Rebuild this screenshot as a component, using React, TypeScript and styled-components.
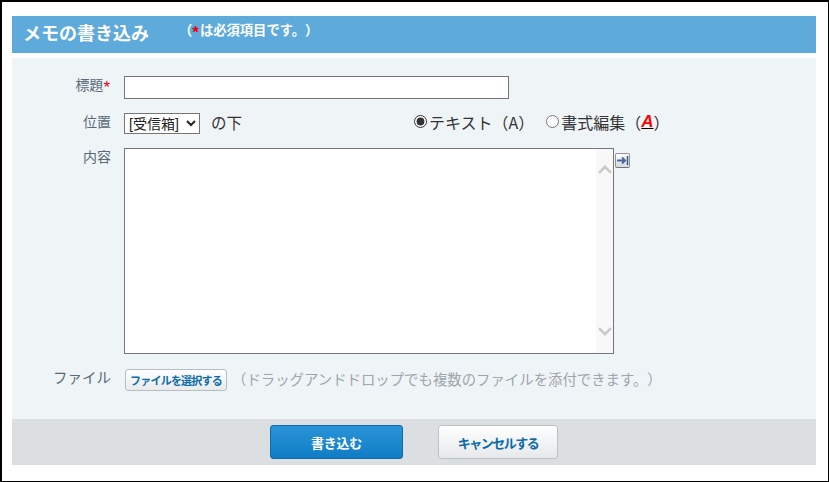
import React from "react";
import styled, { createGlobalStyle } from "styled-components";

const Global = createGlobalStyle`
  html, body { margin: 0; padding: 0; background: #fff; }
  body { font-family: "Noto Sans CJK JP", "Liberation Sans", sans-serif; text-spacing-trim: space-all; }
  * { box-sizing: border-box; }
`;
const Frame = styled.div`
  width: 829px; height: 482px; border: 2px solid #000; border-bottom-width: 1px; border-right-width: 1px;
  padding: 14px 12px 0 10px; overflow: hidden;
`;
const Header = styled.div`
  height: 37px; background: #5daadb; display: flex; align-items: flex-start; color: #fff; padding-left: 11px;
`;
const Title = styled.h1`
  margin: 3px 0 0; font-size: 18px; line-height: 26px; font-weight: 700; width: 156px;
`;
const Note = styled.span`
  margin-top: 4px; font-size: 13.3px; line-height: 20px; font-weight: 700; white-space: nowrap;
`;
const Star = styled.span`
  color: #e60012; font-size: 17px; line-height: 1; font-family: "Liberation Sans", sans-serif; vertical-align: -3px; letter-spacing: 1px;
`;
const Form = styled.div`
  margin-top: 5px; height: 361px; background: #eff4f7; padding-top: 18px; display: flex; flex-direction: column;
`;
const Row = styled.div`
  display: flex; align-items: flex-start; height: ${p => p.$h}px;
`;
const Label = styled.div`
  width: 99px; text-align: right; font-size: ${p => p.$s || 14}px; line-height: 20px; color: #5a6a78; margin: -2px 13px 0 0; white-space: nowrap;
`;
const TextInput = styled.input`
  width: 385px; height: 23px; border: 1px solid #767676; background: #fff; padding: 0 4px; outline: none;
`;
const Select = styled.select`
  width: 76px; height: 21px; border: 1px solid #767676; border-radius: 0; background: #fff; font: 14px "Liberation Sans", "Noto Sans CJK JP", sans-serif; color: #222; padding: 0; margin: 0;
`;
const After = styled.span`
  margin: -1px 0 0 11px; font-size: 15.5px; line-height: 21px; color: #333; width: 203px;
`;
const RadioLabel = styled.label`
  display: flex; align-items: center; height: 21px; margin-top: -2px; font-size: 16px; color: #333; white-space: nowrap; margin-right: ${p => p.$mr || 0}px;
`;
const Radio = styled.input`
  width: 13px; height: 13px; margin: 0 2px 0 0; accent-color: #333;
`;
const AIcon = styled.span`
  color: #f00; font-weight: 700; font-style: italic; text-decoration: underline; text-decoration-color: #000; font-family: "Liberation Sans", sans-serif; font-size: 17px;
`;
const AreaBox = styled.div`
  width: 490px; height: 206px; border: 1px solid #767676; background: #fff; display: flex; justify-content: flex-end;
`;
const Scroll = styled.div`
  width: 17px; background: #f8f8f8; display: flex; flex-direction: column; justify-content: space-between; align-items: center; padding: 16px 0 17px;
`;
const Expand = styled.button`
  width: 15px; height: 15px; margin: 5px 0 0 1px; padding: 0; background: linear-gradient(#fff, #d5dade); border: 1px solid #8d9499; border-bottom-color: #6f767b; border-radius: 2px; display: flex; align-items: center; justify-content: center;
`;
const FileButton = styled.button`
  margin: 0 0 0 1px; width: 102px; height: 22px; padding: 0; border: 1px solid #b4bec3; border-radius: 3px; background: linear-gradient(#fff, #e8eaec); color: #0b6aa8; font: 700 11px/20px "Noto Sans CJK JP", sans-serif; letter-spacing: -0.8px; white-space: nowrap;
`;
const Hint = styled.span`
  margin: 0 0 0 5px; font-size: 14.4px; line-height: 20px; color: #a0a5a9; white-space: nowrap;
`;
const Footer = styled.div`
  height: 46px; background: #dbdfe2; display: flex; justify-content: center; align-items: flex-start; padding: 6px 0 0; gap: 35px;
`;
const Primary = styled.button`
  width: 133px; height: 34px; border: 1px solid #0f6aa8; border-radius: 3px; background: linear-gradient(#2a94d8, #0f7cc4); color: #fff; font: 700 13px "Noto Sans CJK JP", sans-serif; letter-spacing: -0.3px; padding: 0;
`;
const Secondary = styled.button`
  width: 120px; height: 34px; border: 1px solid #bac3c8; border-radius: 3px; background: linear-gradient(#fff, #e6e8ea); color: #0b6aa8; font: 700 13px "Noto Sans CJK JP", sans-serif; letter-spacing: -1.5px; padding: 0;
`;

const Chevron = ({ up }: { up?: boolean }) => (
  <svg width="14" height="9" viewBox="0 0 14 9">
    <path d={up ? "M1 7.8 L7 1.8 L13 7.8" : "M1 1.2 L7 7.2 L13 1.2"} fill="none" stroke="#c9c9c9" strokeWidth="2.6" />
  </svg>
);

export default function App() {
  return (
    <>
      <Global />
      <Frame>
        <Header>
          <Title>メモの書き込み</Title>
          <Note>（<Star>*</Star>は必須項目です。）</Note>
        </Header>
        <Form>
          <Row $h={37}>
            <Label>標題<Star>*</Star></Label>
            <TextInput />
          </Row>
          <Row $h={35}>
            <Label>位置</Label>
            <Select defaultValue="r"><option value="r">[受信箱]</option></Select>
            <After>の下</After>
            <RadioLabel $mr={12}><Radio type="radio" name="f" defaultChecked />テキスト（A）</RadioLabel>
            <RadioLabel><Radio type="radio" name="f" />書式編集（<AIcon>A</AIcon>）</RadioLabel>
          </Row>
          <Row $h={221}>
            <Label>内容</Label>
            <AreaBox>
              <Scroll><Chevron up /><Chevron /></Scroll>
            </AreaBox>
            <Expand aria-label="expand">
              <svg width="12" height="9" viewBox="0 0 12 9">
                <path d="M0 4.5 H7 M5 1.5 L8 4.5 L5 7.5" fill="none" stroke="#4a6a9a" strokeWidth="2" />
                <path d="M10.5 0 V9" stroke="#3a5580" strokeWidth="1.5" />
              </svg>
            </Expand>
          </Row>
          <Row $h={40}>
            <Label $s={14.5}>ファイル</Label>
            <FileButton>ファイルを選択する</FileButton>
            <Hint>（ドラッグアンドドロップでも複数のファイルを添付できます。）</Hint>
          </Row>
        </Form>
        <Footer>
          <Primary>書き込む</Primary>
          <Secondary>キャンセルする</Secondary>
        </Footer>
      </Frame>
    </>
  );
}
